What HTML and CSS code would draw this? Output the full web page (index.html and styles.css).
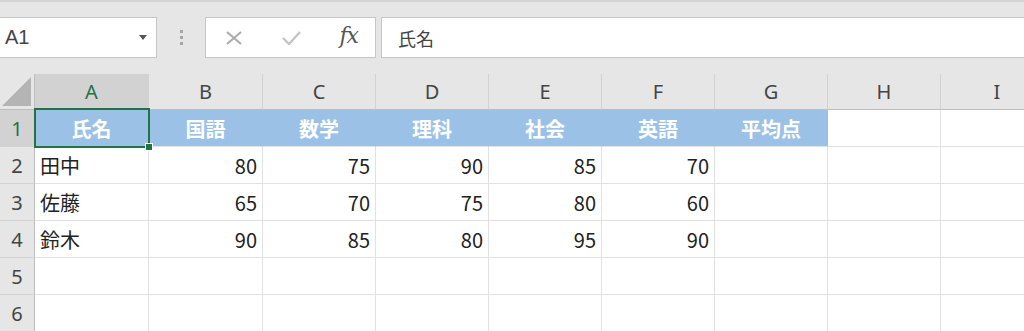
FILE: index.html
```html
<!DOCTYPE html>
<html lang="ja">
<head>
    <meta charset="UTF-8">
    <title>Book1 - Excel</title>
    <link rel="stylesheet" href="styles.css">
</head>
<body>
    <div class="toolbar">
        <div class="namebox">
            <span class="namebox-text">A1</span>
            <span class="caret"></span>
        </div>
        <div class="grip"><i></i><i></i><i></i></div>
        <div class="fx-tools">
            <svg class="icon-cancel" width="18" height="14" viewBox="0 0 18 14">
                <path d="M2 1 L16 13 M16 1 L2 13" stroke="#aaaaaa" stroke-width="2" fill="none"/>
            </svg>
            <svg class="icon-ok" width="19" height="14" viewBox="0 0 19 14">
                <path d="M1 7 L7 13 L18 1" stroke="#c4c4c4" stroke-width="2.4" fill="none"/>
            </svg>
            <span class="fx">fx</span>
        </div>
        <div class="formula">氏名</div>
    </div>
    <div class="sheet" id="sheet"></div>
    <script>
        const cols = ["A", "B", "C", "D", "E", "F", "G", "H", "I"];
        const head = ["氏名", "国語", "数学", "理科", "社会", "英語", "平均点"];
        const rows = [
            ["田中", 80, 75, 90, 85, 70],
            ["佐藤", 65, 70, 75, 80, 60],
            ["鈴木", 90, 85, 80, 95, 90]
        ];

        function renderSheet() {
            const sheet = document.getElementById('sheet');
            let html = '<div class="corner"><span class="corner-mark"></span></div>';
            cols.forEach((c, i) => {
                html += `<div class="col-head${i === 0 ? ' active' : ''}">${c}</div>`;
            });
            for (let r = 1; r <= 6; r++) {
                html += `<div class="row-head${r === 1 ? ' active' : ''}">${r}</div>`;
                cols.forEach((c, i) => {
                    let cls = 'cell';
                    let text = '';
                    if (r === 1 && i < head.length) {
                        cls += ' title';
                        text = head[i];
                        if (i === 0) cls += ' selected';
                    } else if (r >= 2 && r <= 4 && i < 6) {
                        const v = rows[r - 2][i];
                        cls += typeof v === 'number' ? ' num' : ' txt';
                        text = v;
                    }
                    html += `<div class="${cls}">${text}</div>`;
                });
            }
            sheet.innerHTML = html;
        }

        renderSheet();
    </script>
</body>
</html>
```

FILE: styles.css
```css
body {
    margin: 0;
    background: #e6e6e6;
    font-family: "Noto Sans CJK JP", "Noto Sans", sans-serif;
    overflow: hidden;
    border-top: 2px solid #d4d4d4;
}
.toolbar {
    display: flex;
    align-items: center;
    padding: 15px 0 16px 0;
}
.namebox {
    width: 158px;
    height: 41px;
    margin-left: -1px;
    box-sizing: border-box;
    background: #fff;
    border: 1px solid #c6c6c6;
    display: flex;
    align-items: center;
    justify-content: space-between;
    padding: 0 9px 0 5px;
}
.namebox-text {
    font-family: "Liberation Sans", sans-serif;
    font-size: 20px;
    color: #444;
}
.caret {
    width: 0;
    height: 0;
    border-left: 4px solid transparent;
    border-right: 4px solid transparent;
    border-top: 5px solid #555;
}
.grip {
    width: 48px;
    display: flex;
    flex-direction: column;
    align-items: center;
    gap: 3px;
}
.grip i {
    display: block;
    width: 3px;
    height: 3px;
    background: #a6a6a6;
}
.fx-tools {
    width: 171px;
    height: 41px;
    box-sizing: border-box;
    background: #fff;
    border: 1px solid #c6c6c6;
    display: flex;
    align-items: center;
    justify-content: space-between;
    padding: 0 17px 0 19px;
}
.fx {
    font-family: "DejaVu Serif", serif;
    font-style: italic;
    font-size: 22px;
    color: #555;
    letter-spacing: -1px;
    line-height: 1;
    margin-top: -3px;
}
.formula {
    flex: 1;
    height: 41px;
    box-sizing: border-box;
    margin-left: 5px;
    background: #fff;
    border: 1px solid #c6c6c6;
    border-right: none;
    display: flex;
    align-items: center;
    padding-left: 16px;
    font-size: 18px;
    color: #444;
}
.sheet {
    display: grid;
    grid-template-columns: 35px 114px 114px repeat(7, 113px);
    grid-template-rows: 36px repeat(6, 37px);
    background: #fff;
}
.sheet > div {
    box-sizing: border-box;
}
.corner {
    background: #e6e6e6;
    border-right: 1px solid #bdbdbd;
    border-bottom: 1px solid #bdbdbd;
    display: flex;
    align-items: flex-end;
    justify-content: flex-end;
    padding: 0 3px 3px 0;
}
.corner-mark {
    width: 29px;
    height: 29px;
    background: #b4b4b4;
    clip-path: polygon(100% 0, 100% 100%, 0 100%);
}
.col-head {
    background: #e6e6e6;
    border-right: 1px solid #d2d2d2;
    border-bottom: 1px solid #bdbdbd;
    display: flex;
    align-items: center;
    justify-content: center;
    font-family: "Noto Sans", sans-serif;
    font-size: 20px;
    color: #444;
}
.row-head {
    background: #e6e6e6;
    border-right: 1px solid #bdbdbd;
    border-bottom: 1px solid #d2d2d2;
    display: flex;
    align-items: center;
    justify-content: center;
    font-family: "Noto Sans", sans-serif;
    font-size: 20px;
    color: #444;
}
.col-head.active, .row-head.active {
    background: #d2d2d2;
    color: #217346;
}
.cell {
    border-right: 1px solid #e1e1e1;
    border-bottom: 1px solid #e1e1e1;
    display: flex;
    align-items: center;
    padding: 0 5px;
    font-size: 20px;
    color: #222;
}
.cell.num {
    justify-content: flex-end;
}
.cell.title {
    background: #9bc2e6;
    border-right-color: #9bc2e6;
    justify-content: center;
    color: #fff;
    font-weight: bold;
    font-size: 20px;
}
.cell.selected {
    position: relative;
}
.cell.selected::before {
    content: "";
    position: absolute;
    top: -2px;
    left: -1px;
    right: -2px;
    bottom: -2px;
    border: 2px solid #217346;
}
.cell.selected::after {
    content: "";
    position: absolute;
    right: -5px;
    bottom: -5px;
    width: 6px;
    height: 6px;
    background: #217346;
    border: 1px solid #fff;
}
```
